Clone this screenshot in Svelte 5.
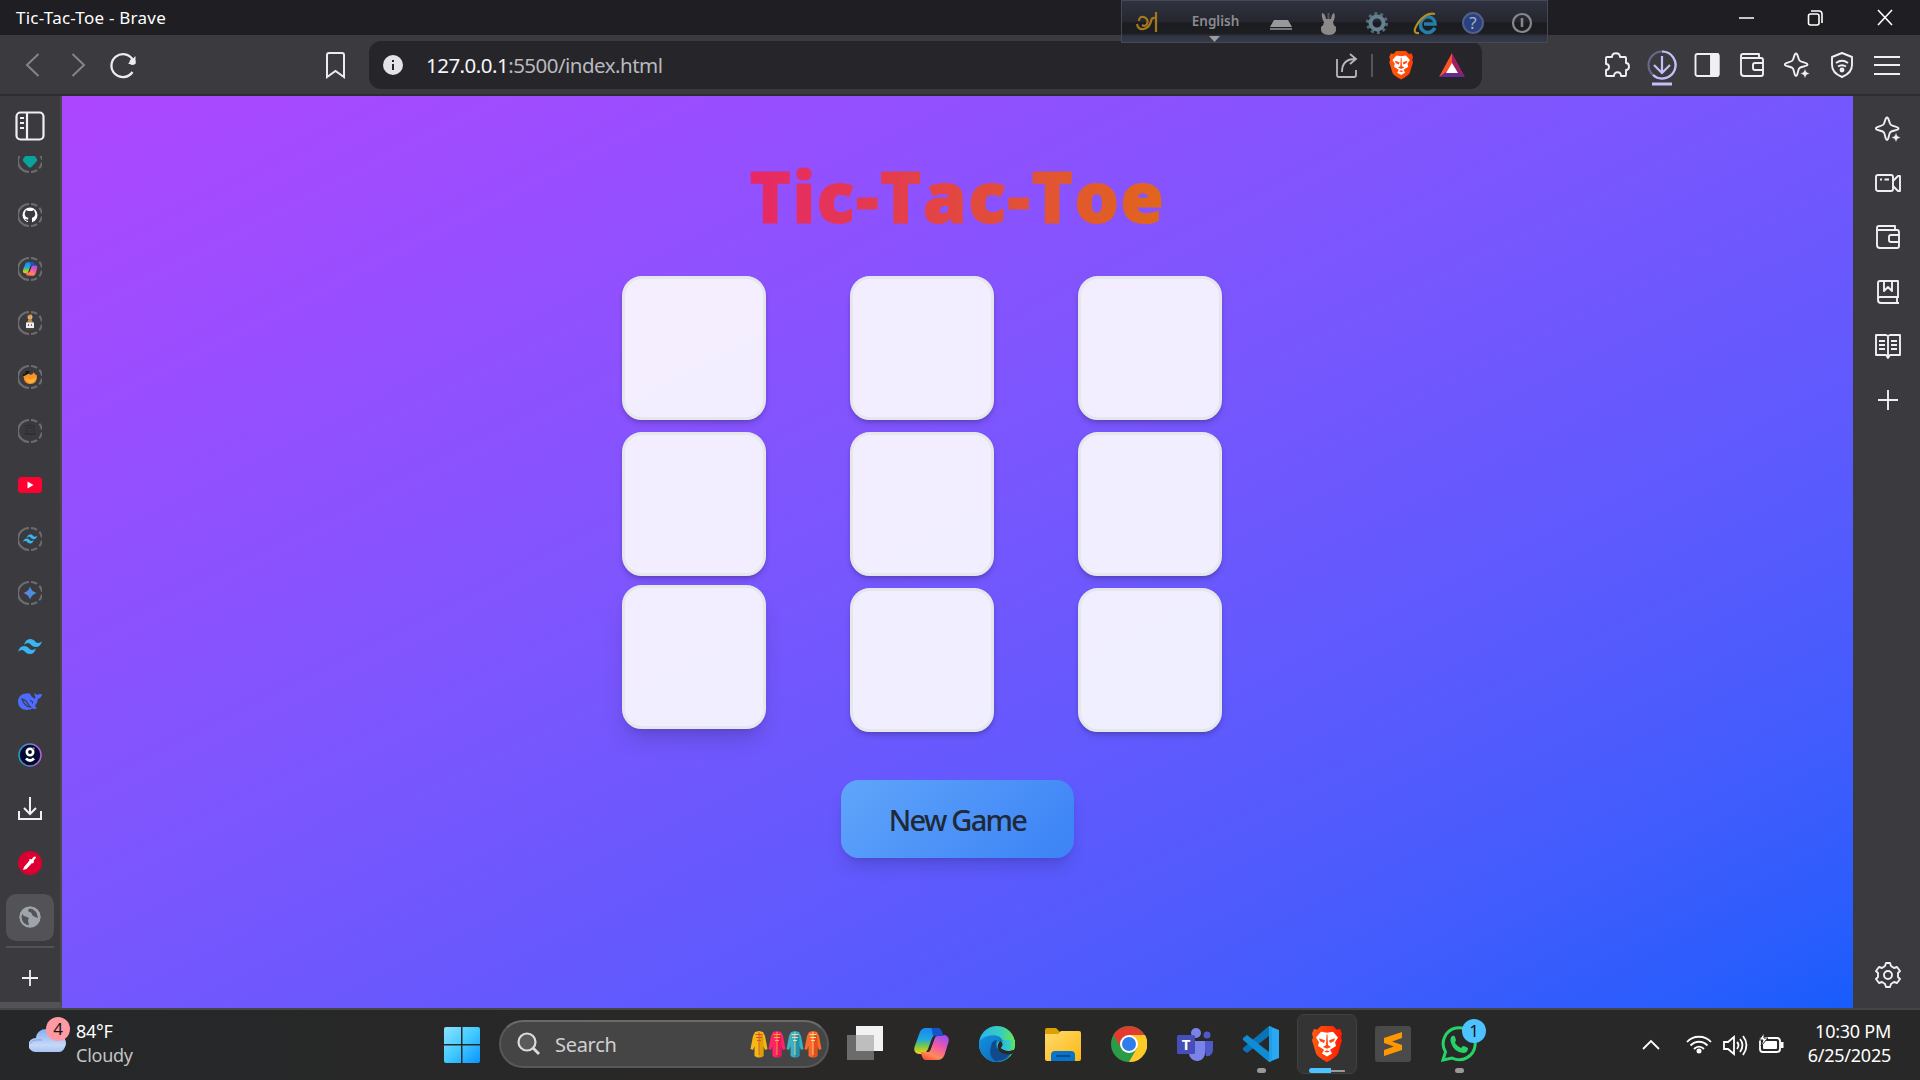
<script>
  let board = $state(Array(9).fill(''));
  let turn = $state('X');
  function play(i) {
    if (board[i]) return;
    board[i] = turn;
    turn = turn === 'X' ? 'O' : 'X';
  }
  function reset() {
    board = Array(9).fill('');
    turn = 'X';
  }
  const tabs = ['gem', 'github', 'copilot', 'coder', 'bird', 'bot', 'youtube', 'tailwind', 'gemini', 'tailwindBig', 'whale', 'g', 'download', 'pen', 'globe'];
  const ringed = ['gem', 'github', 'copilot', 'coder', 'bird', 'bot', 'tailwind', 'gemini'];
  const tools = ['puzzle', 'downloads', 'panel', 'wallet', 'sparkle', 'shield', 'menu'];
  const side = ['sparkle', 'camera', 'wallet', 'book', 'reader', 'plus'];
  const apps = ['taskview', 'copilot', 'edge', 'folder', 'chrome', 'teams', 'vscode', 'brave', 'sublime', 'whatsapp'];
  const coats = [['#f4b916', '#c98f00', '#e8482c'], ['#ff2468', '#d80d55', '#ffb22e'], ['#3bb0c4', '#137f99', '#f4d9a0'], ['#fb6a2a', '#d43c10', '#ffe0a0']];
</script>

{#snippet copilot()}
  <path d="M12 2h11c3 0 4 2 5 5l1 3h-5c-4 0-5 2-6 5l-3 9c-1 3-3 4-6 4H6c-4 0-6-3-5-7L6 7c1-3 3-5 6-5z" fill="url(#cpA)" />
  <path d="M24 34H13c-3 0-4-2-5-5l-1-3h5c4 0 5-2 6-5l3-8c1-3 3-4 6-4h3c4 0 6 3 5 7l-4 13c-1 3-4 5-7 5z" fill="url(#cpB)" />
  <path d="M18 2h6c3 0 4 2 5 5l1 3h-5c-3 0-4 1-5 3z" fill="#1653c8" />
  <path d="m18.500 12q1-2 3-2h1q-1 1-2 3l-4 12q-1 1-2 1h-2q1-1 2-3z" fill="#292929" />
{/snippet}

{#snippet lion(id)}
  <path d="M9 0h12l4 4 3-1 2 5-1 4 1 3-4 14c-1 3-4 4-6 6l-5 3-5-3c-2-2-5-3-6-6L0 15l1-3-1-4 2-5 3 1z" fill="url(#{id})" />
  <path d="m9 6 6 1 6-1 5 6-3 5 1 4-6 4 2 4-5 3-5-3 2-4-6-4 1-4-3-5z" fill="#fff" />
  <path d="m7 13 6 2-1 3-4-2zM23 13l-6 2 1 3 4-2zM14.500 9h1l.5 11 3 2-4 2-4-2 3-2zM12 27l3-1.500 3 1.500-3 1z" fill="#ff4a15" />
{/snippet}

{#snippet wave()}
  <path d="M6 10c1-4 3-6 6-6 5 0 5 4 8 4 2 0 3-1 4-2-1 4-3 6-6 6-5 0-5-4-8-4-2 0-3 1-4 2zM0 17c1-4 3-6 6-6 5 0 5 4 8 4 2 0 3-1 4-2-1 4-3 6-6 6-5 0-5-4-8-4-2 0-3 1-4 2z" fill="#38b6f1" />
{/snippet}

{#snippet line(name)}
  <svg class="line" width="26" height="26" viewBox="0 0 26 26">
    {#if name === 'puzzle'}
      <path d="M3 5h5c0-5 8-5 8 0h5a1 1 0 0 1 1 1v5c4 0 4 7 0 7v5a1 1 0 0 1-1 1h-4c0-5-7-5-7 0H3a1 1 0 0 1-1-1v-5c4 0 4-6 0-6V6a1 1 0 0 1 1-1z" />
    {:else if name === 'panel'}
      <rect x="1.500" y="2" width="23" height="22" rx="2" /><path d="M17 2h6a1.500 1.500 0 0 1 1.500 1.500v19A1.500 1.500 0 0 1 23 24h-6z" fill="#f0f0f3" />
    {:else if name === 'wallet'}
      <path d="M2 5v16a3 3 0 0 0 3 3h17a2 2 0 0 0 2-2V8a2 2 0 0 0-2-2H3M2 6V4a2 2 0 0 1 2-2h16v4M24 11h-8a2 2 0 0 0-2 2v3a2 2 0 0 0 2 2h8" />
    {:else if name === 'sparkle'}
      <path d="M12 1.500c2 0 1.800 5 3.500 7S23.500 10.500 23.500 12.500s-6 1.800-8 3.500-1.500 8-3.500 8-1.500-6.300-3.500-8S.800 14.500.8 12.500s6-2 7.700-4S10 1.500 12 1.500z" /><path d="m21 16.500 1.500 3.500 3.500 1.500-3.500 1.500-1.500 3.500-1.500-3.500-3.500-1.500 3.500-1.500z" fill="#f0f0f3" stroke="#3b3a3f" stroke-width=".6" />
    {:else if name === 'shield'}
      <path d="m13 1 10 4v8c0 6-5 10-10 12C8 23 3 19 3 13V5zM7 11c4-3 8-3 12 0M9 14.500c3-2 5-2 8 0" /><circle cx="13" cy="18" r="1.500" fill="#f0f0f3" />
    {:else if name === 'menu'}
      <path d="M0 5h26M0 13h26M0 22h26" />
    {:else if name === 'camera'}
      <rect x="1" y="5" width="17" height="16" rx="2" /><path d="m18 11 5-5h2v15h-2l-5-5" /><path d="M5 9.500h2M9.500 9.500H14" />
    {:else if name === 'book'}
      <path d="M23 19V2H5a2 2 0 0 0-2 2v17a3 3 0 0 0 3 3h18M3 20a2 2 0 0 1 2-2h18M22 19v5M9 2v10l4-4 4 4V2" />
    {:else if name === 'reader'}
      <path d="M1 2h10l2 1 2-1h10v20H15l-2 3-2-3H1zM13 3v20M4 8h6M4 12h6M4 16h6M16 8h6M16 12h6M16 16h6" />
    {:else if name === 'plus'}
      <path d="M13 3v20M3 13h20" />
    {:else if name === 'gear'}
      <path d="m10 4 1-3h4l1 3 3 2 3-1 3 4-2 2v4l2 2-3 4-3-1-3 2-1 3h-4l-1-3-3-2-3 1-3-4 2-2v-4L1 9l3-4 3 1z" /><circle cx="13" cy="13" r="4" />
    {/if}
  </svg>
{/snippet}

<svg class="defs" width="0" height="0">
  <defs>
    <linearGradient id="cpA" x1="0" y1="0" x2="0" y2="1"><stop offset=".1" stop-color="#1a8df0" /><stop offset=".45" stop-color="#22a9dd" /><stop offset=".7" stop-color="#7cc940" /><stop offset="1" stop-color="#f7d11c" /></linearGradient>
    <linearGradient id="cpB" x1=".8" y1="0" x2=".3" y2="1"><stop offset="0" stop-color="#9a4ff5" /><stop offset=".45" stop-color="#f15ba4" /><stop offset=".8" stop-color="#ff8b58" /><stop offset="1" stop-color="#ff5a3c" /></linearGradient>
    <linearGradient id="win" x1="0" y1="0" x2="1" y2="1"><stop stop-color="#8be3ff" /><stop offset=".5" stop-color="#42c9ff" /><stop offset="1" stop-color="#0a93ff" /></linearGradient>
    <linearGradient id="lionA"><stop stop-color="#ff5a10" /><stop offset="1" stop-color="#ff3f00" /></linearGradient>
    <linearGradient id="lionB"><stop stop-color="#ff5a10" /><stop offset="1" stop-color="#ff1c00" /></linearGradient>
    <linearGradient id="edA"><stop stop-color="#25b6ee" /><stop offset=".6" stop-color="#38cdbe" /><stop offset="1" stop-color="#69e84a" /></linearGradient>
    <linearGradient id="edB" x1="0" y1="0" x2="1" y2="1"><stop stop-color="#1292e0" /><stop offset="1" stop-color="#0c62b5" /></linearGradient>
    <linearGradient id="fol" x1="0" y1="0" x2="1" y2="1"><stop stop-color="#ffd970" /><stop offset="1" stop-color="#fbb90f" /></linearGradient>
    <linearGradient id="cld" x1="0" y1="0" x2="0" y2="1"><stop stop-color="#86aef0" /><stop offset=".7" stop-color="#c5d8f8" /><stop offset="1" stop-color="#a9c3f2" /></linearGradient>
    <linearGradient id="gem" x1="0" x2="1"><stop stop-color="#a274cc" /><stop offset=".5" stop-color="#468ce0" /><stop offset="1" stop-color="#3da3e6" /></linearGradient>
    <linearGradient id="gr"><stop stop-color="#1c9fc0" /><stop offset="1" stop-color="#c05ae0" /></linearGradient>
  </defs>
</svg>

<div class="screen">
  <header class="titlebar">
    <span class="caption">Tic-Tac-Toe - Brave</span>
    <svg width="160" height="20" viewBox="0 0 160 20" fill="none" stroke="#fff" stroke-width="1.600">
      <path d="M5 10h15M144 2l14 15M158 2l-14 15" /><rect x="74.500" y="6" width="10.500" height="11" rx="2" /><path d="M77 3h8q3 0 3 3v9" />
    </svg>
  </header>

  <nav class="toolbar">
    <svg width="369" height="48" viewBox="0 0 369 48" fill="none" stroke="#ececf0" stroke-width="2">
      <path d="M38.500 13 27 24l11.500 11M72.500 13 84 24 72.500 35" stroke="#85848a" />
      <path d="M132.500 31A11.500 11.500 0 1 1 133 19" stroke-width="2.300" /><circle cx="132.500" cy="21" r="3" fill="#ececf0" stroke="none" /><path d="M135.500 15v8H128z" fill="#ececf0" stroke="none" />
      <path d="M327 14a2 2 0 0 1 2-2h13a2 2 0 0 1 2 2v22l-8.500-6L327 36z" />
    </svg>
    <div class="address">
      <svg width="20" height="20" viewBox="0 0 20 20"><circle cx="10" cy="10" r="10" fill="#e3e3e8" /><path d="M10 9v6M10 5v2" stroke="#26252a" stroke-width="2" /></svg>
      <span class="url"><b>127.0.0.1</b>:5500/index.html</span>
      <svg class="actions" width="132" height="32" viewBox="0 0 132 32" fill="none">
        <path d="M2 10v16a2 2 0 0 0 2 2h15a2 2 0 0 0 2-2v-5M7 23c0-9 4-13 13-13M15 5l6 5-6 5" stroke="#b8b7bc" stroke-width="1.800" />
        <path d="M37 5v23" stroke="#66656a" stroke-width="1.500" />
        <g transform="translate(54.300 2) scale(.79 .75)">{@render lion('lionA')}</g>
        <path d="M117 4v11l-6 9-7 4z" fill="#ff5128" /><path d="m117 4 13 24-7-4-6-9z" fill="#9e1f63" /><path d="m104 28 7-5h12l7 5z" fill="#662d91" /><path d="m117 14 6 10h-12z" fill="#fff" />
      </svg>
    </div>
    <div class="tools">
      {#each tools as tool}
        <span class="tool">
          {#if tool === 'downloads'}
            <svg width="30" height="38" viewBox="0 0 30 38" fill="none" stroke="#c3c1f8" stroke-width="2.200"><circle cx="15" cy="16" r="13.500" stroke="#69688a" /><path d="M15 2.500A13.500 13.500 0 1 1 6 26M15 7v17M7 16l8 8 8-8" /><path d="M5 35h20" stroke-width="3" /></svg>
          {:else}{@render line(tool)}{/if}
        </span>
      {/each}
    </div>
  </nav>

  <div class="middle">
    <aside class="tabs">
      <div class="toggle"><svg width="30" height="30" viewBox="0 0 30 30" fill="none" stroke="#f0f0f3" stroke-width="2.200"><rect x="1.500" y="1.500" width="27" height="27" rx="4" /><path d="M12 1v28M5 7h4M5 12h4M5 17h4" /></svg></div>
      <div class="tablist">
        {#each tabs as tab}
          <div class="tab">
            <span class="chip" class:active={tab === 'globe'}>
              <svg width="24" height="24" viewBox="0 0 24 24" fill="none">
                {#if ringed.includes(tab)}
                  <path d="M11 1a11 11 0 0 0 0 22" stroke="#6d6d71" stroke-width="2" /><path d="M13 1a11 11 0 0 1 0 22" stroke="#6d6d71" stroke-width="2" stroke-dasharray="6.500 2.800" />
                {/if}
                {#if tab === 'gem'}<path d="M8 6h8l3 4v2l-6 6.500h-2L5 12v-2z" fill="#08a39a" />
                {:else if tab === 'github'}<circle cx="12" cy="12" r="7.500" fill="#fff" /><path d="M8 7l2 1h4l2-1 .7 2q1.300 2 0 4-1 1.500-2.700 1.800V20h-4v-2q-2 0-3-2h1l2 .8.300-2Q8 14.500 7.300 13q-1.300-2 0-4z" fill="#3b3a3f" />
                {:else if tab === 'copilot'}<g transform="translate(4.500 4.500) scale(.42)">{@render copilot()}</g>
                {:else if tab === 'coder'}<circle cx="12" cy="6" r="2.500" fill="#d9ad66" /><path d="M9.500 4.500 14 3" stroke="#b84a2c" stroke-width="1.200" /><path d="M10.500 8h3l1.500 4H9z" fill="#b58b50" /><rect x="8" y="11.500" width="8" height="5.500" fill="#eee" /><path d="m11 13-1 1 1 1M13 13l1 1-1 1" stroke="#333" stroke-width=".7" /><path d="M8 18h8" stroke="#6b5030" />
                {:else if tab === 'bird'}<path d="M5.500 11q3-1 4-3 3 3 5 1 1-1 1-2 1 2 3.500 3.500.5 8.500-7 8.500-6 0-6.500-8z" fill="#fb9226" /><path d="M8 13q5 3 10-1-1 6-6 6-3-1-4-5z" fill="#ffb23e" /><path d="M8 6h4l-2 3-4 2H5V9h2z" fill="#171411" />
                {:else if tab === 'bot'}<rect x="8" y="9" width="8" height="6" rx="2" stroke="#2f2e32" /><path d="M7 8q5-4 10 0M6 15h12M10 12h1M13 12h1" stroke="#2b2a2e" />
                {:else if tab === 'youtube'}<rect y="4" width="24" height="16" rx="3.500" fill="#ff0033" /><path d="m9.500 8.500 6 3.500-6 3.500z" fill="#fff" />
                {:else if tab === 'tailwind'}<g transform="translate(5 5) scale(.6)">{@render wave()}</g>
                {:else if tab === 'gemini'}<path d="M12 5.500q1.500 5 6.500 6.500-5 1.500-6.500 6.500-1.500-5-6.500-6.500 5-1.500 6.500-6.500z" fill="url(#gem)" />
                {:else if tab === 'tailwindBig'}{@render wave()}
                {:else if tab === 'whale'}<path d="M0 12.500C0 7 5 4 9 4.500q2-1 3.500 1 .5 1.500 3 3.500 1.500 1 2-.5-1.500-2-1-4.500 1.500 1.500 3 1.800 2-1 4.500-.8-.5 4-4 5-.5 4-3 6.500.5 1.500 2 2.500-2 1.500-4.500.5C8 23 0 20 0 12.500z" fill="#4d6bfe" /><path d="M4 10q4 1 6 5 1.500 2 2.500 3-6-.5-8.500-8zM12 11.500q3 .5 2.500 3" stroke="#3b3a3f" stroke-width="1.100" />
                {:else if tab === 'g'}<circle cx="12" cy="12" r="11" fill="#030a32" stroke="url(#gr)" stroke-width="1.500" /><circle cx="12" cy="9" r="3.200" stroke="#fff" stroke-width="2.600" /><circle cx="15.500" cy="5.500" r="1.200" fill="#888" /><path d="M8 15.500q4 4 8 0" stroke="#fff" stroke-width="2.800" />
                {:else if tab === 'download'}<path d="M12 0v16M6 11l6 6 6-6M1 14v8h22v-8" stroke="#f0f0f3" stroke-width="2" />
                {:else if tab === 'pen'}<circle cx="12" cy="12" r="12" fill="#dc0032" /><path d="m5 19 1-3 5.500-6.500-.5-1 1.500-.5 1 .5L15.500 6q2-1 2.500.5L15.500 10l.5 1-1 1.500-1-.5-5.500 6z" fill="#fff" />
                {:else}<circle cx="12" cy="12" r="10.500" fill="#9ea4ab" /><path d="M4 9q2 3 5 3 3 1 1 3l1 6q-8-1-8-9zM12 3q-3 2-1 4 3 0 3 3l3 2 3 1q-1-8-8-10z" fill="#535257" /><circle cx="12" cy="12" r="9.500" stroke="#9ea4ab" stroke-width="2" />{/if}
              </svg>
            </span>
          </div>
        {/each}
      </div>
      <div class="rule"></div>
      <div class="add"><svg width="16" height="16" viewBox="0 0 16 16"><path d="M8 0v16M0 8h16" stroke="#f0f0f3" stroke-width="1.800" /></svg></div>
    </aside>

    <main class="page">
      <h1>Tic-Tac-Toe</h1>
      <div class="board">
        {#each board as mark, i}
          <button class="cell" class:raised={i === 6} onclick={() => play(i)} aria-label="Cell {i + 1}">{mark}</button>
        {/each}
      </div>
      <button class="new" onclick={reset}>New Game</button>
    </main>

    <aside class="side">
      {#each side as item}<span class="slot">{@render line(item)}</span>{/each}
      <span class="slot last">{@render line('gear')}</span>
    </aside>
  </div>

  <footer class="taskbar">
    <div class="weather">
      <svg width="42" height="40" viewBox="0 0 42 40"><path d="M6 35a7 7 0 0 1 1-14c1-11 17-12 20-2 8-2 12 5 9 11q-2 5-6 5z" fill="url(#cld)" /><path d="M1 27c3-5 7-4 12-4" stroke="#7f9fe0" fill="none" /><circle cx="29" cy="12" r="12" fill="#ff99a4" /><text x="29" y="18" text-anchor="middle" class="badge">4</text></svg>
      <div class="lines"><span>84°F</span><span class="dim">Cloudy</span></div>
    </div>
    <svg class="start" width="36" height="36" viewBox="0 0 36 36"><path d="M2 0h15v17H0V2q0-2 2-2zM18.500 0H34q2 0 2 2v15H18.500zM0 18.500h17V36H2q-2 0-2-2zM18.500 18.500H36V34q0 2-2 2H18.500z" fill="url(#win)" /></svg>
    <div class="search">
      <svg width="24" height="24" viewBox="0 0 24 24" fill="none" stroke="#dcdce0"><circle cx="10" cy="10" r="8.500" fill="#5a5a5b" stroke-width="2.200" /><path d="m16 16 6 6" stroke-width="2.800" /></svg>
      <span>Search</span>
      <svg class="coats" width="72" height="28" viewBox="0 0 72 28">
        {#each coats as [a, b, c], i}
          <g transform="translate({i * 18} 0)"><path d="m5 2 4-1 4 1 2 4 2.500 13-2.500 1-1.500-4v10q-4.500 3-9 0V16L3 20l-2.500-1L3 6z" fill={a} /><path d="M9 3v24q3 0 4.500-1V8l-1-4z" fill={b} opacity=".6" /><path d="M9 2v23" stroke={c} stroke-width=".8" /><path d="M5.500 4.500h7M6 7.500h6M7 10.500h4" stroke={c} stroke-width="1.100" /></g>
        {/each}
      </svg>
    </div>
    <div class="apps">
      {#each apps as app}
        <div class="app" class:open={app === 'brave'}>
          <div class="tile">
            <svg width="36" height="36" viewBox="0 0 36 36">
              {#if app === 'taskview'}<path d="M9 0h27v25H9z" fill="#f2f2f2" /><path d="M0 9h27v25H0z" fill="#6b6b6b" /><path d="M9 9h18v16H9z" fill="#bebebe" />
              {:else if app === 'copilot'}<g transform="translate(.5 0)">{@render copilot()}</g>
              {:else if app === 'edge'}<circle cx="18" cy="18" r="18" fill="url(#edA)" /><path d="M0 18C0 9 22 5 24 16q-7-2-6 5 2 9 14 7-5 8-14 8A18 18 0 0 1 0 18z" fill="url(#edB)" /><path d="M12 21q0-6 6-7-4 9 5 11 5 1 10-1-6 12-17 11-7-6-4-14z" fill="#114a8b" /><path d="M21 15q3 1 3 5l-2 2q4 4 12 2l2 0-3 4q-6 1-10-1-6-3-4-9z" fill="#292929" /><path d="M22 22q2-2 2-5l3-5 9 5q0 5-3 7-5 2-11-2z" fill="#55dc70" /><path d="M24 14h12v6q-1 3-3 4-5 2-11-2 3-3 2-8z" fill="url(#edA)" /><path d="M33 27q-4 2-10-.5-4-2-4-6.500 1 3 4 4.500 5 2.500 11 .5z" fill="#292929" />
              {:else if app === 'folder'}<path d="M0 4q0-2 2-2h9l4 4v6H0z" fill="#dca004" /><path d="m0 8h13l3-3h18q2 0 2 2v26q0 2-2 2H2q-2 0-2-2z" fill="url(#fol)" /><path d="M6 35V29q0-4 4-4h16q4 0 4 4v6z" fill="#0873ca" /><path d="M11 30h14" stroke="#084a8c" stroke-width="2" />
              {:else if app === 'chrome'}<circle cx="18" cy="18" r="18" fill="#2b9b48" /><path d="M18 36A18 18 0 0 0 34 9H18l8 13z" fill="#ffca28" /><path d="M2.500 9a18 18 0 0 1 31 0H18L9 20z" fill="#e23b30" /><circle cx="18" cy="18" r="9" fill="#fff" /><circle cx="18" cy="18" r="7" fill="#2f7de9" />
              {:else if app === 'teams'}<circle cx="19" cy="7" r="5" fill="#7b83eb" /><circle cx="30" cy="9" r="3.500" fill="#5059c9" /><path d="M26 15h10v9q-1 7-7 6z" fill="#5059c9" /><path d="M12 15h16v11a8 8 0 0 1-16 2z" fill="#7b83eb" /><rect y="9" width="18" height="19" rx="1.500" fill="#464eb8" /><text x="9" y="24" text-anchor="middle" class="teams">T</text>
              {:else if app === 'vscode'}<path d="m26 0 10 4v28l-10 4z" fill="#2aa8f2" /><path d="M26 0v10L4 27l-4-3v-2z" fill="#0873b8" /><path d="M26 36V26L4 9l-4 3v2z" fill="#108cd4" /><path d="m26 0 3 1v34l-3 1z" fill="#229ee6" />
              {:else if app === 'brave'}<g transform="translate(3 0) scale(1 .95)">{@render lion('lionB')}</g>
              {:else if app === 'sublime'}<rect width="36" height="36" rx="3" fill="#4a4a4a" /><path d="m9 12 18-6v6l-10 3.500L27 19v5L9 30v-6l10-3.500L9 17z" fill="#ff9800" />
              {:else}<path d="m2 34 2.500-8A16 16 0 1 1 11 32z" fill="#292929" stroke="#25d366" stroke-width="3" /><path d="M10 11q3-3 4 0l1 3-1 3q2 3 6 5l2-2q2 0 5 2 0 5-5 5-9-1-12-10-1-4 0-6z" fill="#25d366" />{/if}
            </svg>
            {#if app === 'brave'}<i class="progress"></i>{:else if app === 'vscode' || app === 'whatsapp'}<i class="dot"></i>{/if}
            {#if app === 'whatsapp'}<span class="count">1</span>{/if}
          </div>
        </div>
      {/each}
    </div>
    <svg class="tray" width="142" height="24" viewBox="0 0 142 24" fill="none" stroke="#fff" stroke-width="1.800">
      <path d="m1 16 8-8 8 8" />
      <path d="M45 9c6-7 18-7 24 0M48.500 12.500c5-5 12-5 17 0M52 16c3-3 7-3 10 0" /><circle cx="57" cy="18" r="2.500" fill="#fff" stroke="none" />
      <path d="M82 9h4l6-5v17l-6-5h-4zM95 9q3 3 0 7M98 6q5 6 0 13M101 3q7 9 0 19" />
      <rect x="118" y="5" width="20" height="14" rx="3" /><rect x="121" y="8" width="14" height="8" rx="1" fill="#fff" stroke="none" /><path d="M140 9v6" stroke-width="3" /><path d="m122 0-5 7h4l-2 6 7-8h-4z" fill="#fff" stroke="#282828" stroke-width="1" />
    </svg>
    <div class="clock"><span>10:30 PM</span><span>6/25/2025</span></div>
  </footer>

  <div class="langbar">
    <svg width="427" height="43" viewBox="0 0 427 43" fill="none">
      <path d="M18 21q0-5 5-4 5 2 3 7-2 3-5 1M16 24q1 6 7 5 6-2 7-8 1-4 4-3M35 12v20" stroke="#a4781b" stroke-width="2.200" />
      <text x="94.500" y="26" text-anchor="middle" class="lang">English</text>
      <path d="M88 36h11l-5.500 6z" fill="#9b9ba0" />
      <path d="M153 20h14l4 7h-22z" fill="#99999c" /><path d="M149 29h22" stroke="#77777a" stroke-width="2" />
      <path d="M201 13q3 0 4 6h5q1-6 3-6 2 4-1 9 0 3 3 5 1 8-7 8-9 0-8-8 3-2 3-5-3-5-2-9z" fill="#8b8a88" /><path d="M207.500 13v6" stroke="#55555a" stroke-width="2" />
      <circle cx="256" cy="23" r="9.500" stroke="#536a7b" stroke-width="3" stroke-dasharray="3 2.970" /><circle cx="256" cy="23" r="6.500" stroke="#66808f" stroke-width="4" />
      <path d="M314 28q-4 6-10 4-6-3-4-10 3-6 9-5 5 2 5 7h-11" stroke="#247fa8" stroke-width="3.500" /><path d="M298 33q-8 1-1-10 8-11 17-9" stroke="#b38d25" stroke-width="2.200" />
      <circle cx="352" cy="23" r="10" fill="#29417f" stroke="#525e85" stroke-width="2" /><text x="352" y="29" text-anchor="middle" class="help">?</text>
      <circle cx="401" cy="23" r="9" stroke="#88888b" stroke-width="2.200" /><path d="M401 18v9" stroke="#88888b" stroke-width="2.500" />
    </svg>
  </div>
</div>

<style>
  :global(body) { margin: 0; overflow: hidden; background: #282828; }
  .defs { position: absolute; }
  .screen { position: relative; width: 1920px; height: 1080px; display: flex; flex-direction: column; overflow: hidden; font-family: 'Noto Sans', 'Open Sans', sans-serif; color: #fff; }
  svg { display: block; flex: none; }
  .titlebar { height: 35px; flex: none; box-sizing: border-box; background: #1f1e23; display: flex; align-items: center; justify-content: space-between; padding: 0 26px 0 16px; }
  .caption { font-size: 17px; line-height: 34px; letter-spacing: 0.250px; }
  .toolbar { height: 61px; flex: none; box-sizing: border-box; padding-top: 6px; background: #3b3a3f; border-bottom: 2px solid #2d2c31; display: flex; }
  .address { width: 1113px; height: 48px; box-sizing: border-box; border-radius: 12px; background: #26252a; display: flex; align-items: center; padding: 0 15px 0 14px; }
  .url { margin-left: 23px; font-size: 20.500px; letter-spacing: -0.520px; color: #b9b9bf; }
  .url b { font-weight: 400; color: #f5f5f8; }
  .actions { margin-left: auto; }
  .tools { display: flex; margin-left: 112px; }
  .tool { width: 45px; height: 48px; display: flex; align-items: center; justify-content: center; }
  .tool > svg[height='38'] { margin-top: 6px; }
  .line { fill: none; stroke: #f0f0f3; stroke-width: 1.900; stroke-linejoin: round; }
  .middle { height: 912px; flex: none; display: flex; background: #3b3a3f; }
  .tabs { width: 62px; box-sizing: border-box; border-right: 2px solid #49484b; border-bottom: 6px solid #535257; display: flex; flex-direction: column; }
  .toggle { height: 60px; display: flex; align-items: center; justify-content: center; flex: none; }
  .tablist { height: 791px; flex: none; overflow: hidden; display: flex; flex-direction: column; justify-content: flex-end; }
  .tab { height: 54px; flex: none; display: flex; align-items: center; justify-content: center; }
  .tab:last-child { padding-bottom: 3px; }
  .chip { width: 48px; height: 47px; display: flex; align-items: center; justify-content: center; border-radius: 10px; }
  .chip.active { background: #535257; }
  .rule { height: 2px; margin: -1px 6px 0; background: #535257; flex: none; }
  .add { flex: 1; display: flex; align-items: center; justify-content: center; padding-top: 6px; }
  .page { width: 1791px; box-sizing: border-box; padding-top: 53px; display: flex; flex-direction: column; align-items: center; background: linear-gradient(to bottom right in oklab, #ad46ff, #155dfc); }
  h1 { margin: 0; height: 127px; line-height: 95px; font-size: 70px; font-weight: 900; font-kerning: none; letter-spacing: 1.600px; -webkit-text-stroke: 1.200px transparent; background: linear-gradient(to right, #e62866, #e0661c); -webkit-background-clip: text; background-clip: text; color: transparent; }
  .board { width: 672px; display: grid; grid-template-columns: repeat(3, 1fr); gap: 12px; }
  .cell { width: 144px; height: 144px; box-sizing: border-box; padding: 0; border: 3px solid #e5e7eb; border-radius: 20px; background: rgba(255, 255, 255, 0.9); box-shadow: 0 4px 6px -1px rgba(0, 0, 0, 0.180), 0 2px 4px -2px rgba(0, 0, 0, 0.180); font: 700 64px 'Noto Sans', sans-serif; color: #1f2937; }
  .raised { transform: translateY(-3px); box-shadow: 0 14px 22px -4px rgba(0, 0, 0, 0.150), 0 5px 8px -5px rgba(0, 0, 0, 0.150); }
  .new { margin-top: 48px; width: 233px; height: 78px; border: 0; border-radius: 18px; background: linear-gradient(135deg, #60a5fa, #3b82f6); box-shadow: 0 12px 18px -4px rgba(0, 0, 0, 0.140), 0 4px 7px -4px rgba(0, 0, 0, 0.140); font: 500 29px/39px 'Noto Sans', sans-serif; letter-spacing: -1.750px; color: #1f2937; padding: 1px 0 0; }
  .side { width: 67px; box-sizing: border-box; padding: 6px 0 6px 2px; display: flex; flex-direction: column; align-items: center; }
  .slot { height: 54.200px; display: flex; align-items: center; }
  .last { margin-top: auto; }
  .taskbar { height: 72px; flex: none; box-sizing: border-box; border-top: 2px solid #454545; background: linear-gradient(90deg, #252729, #292827 35%, #282828); display: flex; align-items: flex-start; }
  .weather { width: 444px; display: flex; padding: 7px 0 0 29px; box-sizing: border-box; }
  .badge, .count { font-size: 17px; fill: #151515; }
  .lines, .clock { display: flex; flex-direction: column; font-size: 18px; line-height: 24px; letter-spacing: -0.250px; }
  .lines { margin: 2px 0 0 5px; }
  .dim { color: #c4c4c4; }
  .start { margin-top: 17px; }
  .search { width: 330px; height: 48px; margin: 10px 3px 0 19px; box-sizing: border-box; border: 2px solid #585858; border-top-color: #6a6a6a; border-radius: 24px; background: #454545; display: flex; align-items: center; padding: 0 5px 0 16px; }
  .search span { margin-left: 14px; font-size: 20px; letter-spacing: -0.300px; color: #d0d0d0; }
  .coats { margin-left: auto; }
  .apps { display: flex; margin-top: 4px; }
  .app { width: 66px; display: flex; justify-content: center; }
  .tile { position: relative; width: 60px; height: 60px; box-sizing: border-box; border: 1.500px solid transparent; border-radius: 7px; padding: 11px 0 0 10.500px; }
  .open .tile { background: #343434; border-color: #414141; }
  .dot { position: absolute; left: 25px; bottom: 0; width: 9px; height: 5px; border-radius: 3px; background: #999; }
  .progress { position: absolute; left: 11px; bottom: 0; width: 36px; height: 5px; border-radius: 3px; background: linear-gradient(#4cc2ff, #4cc2ff) 0 0 / 22px 5px no-repeat, linear-gradient(#999, #999) 22px 1.500px / 14px 2px no-repeat; }
  .count { position: absolute; left: 32px; top: 4px; width: 24px; height: 24px; border-radius: 50%; background: #4cc2ff; color: #151515; line-height: 24px; text-align: center; }
  .teams { font-size: 15px; font-weight: 700; fill: #fff; }
  .tray { margin: 23px 0 0 150px; }
  .clock { margin: 9px 29px 0 auto; text-align: right; }
  .langbar { position: absolute; left: 1121px; top: 0; width: 427px; height: 43px; background: linear-gradient(#303340 0, #25262f 50%, #1b1c20 53%, #1d1e22 78%, #303340 83%, #373a49); box-shadow: inset 0 0 0 1px #44495a; }
  .lang { font-size: 13.500px; font-weight: 600; fill: #8b8b90; }
  .help { font-size: 17px; fill: #a9b1c5; }
</style>
